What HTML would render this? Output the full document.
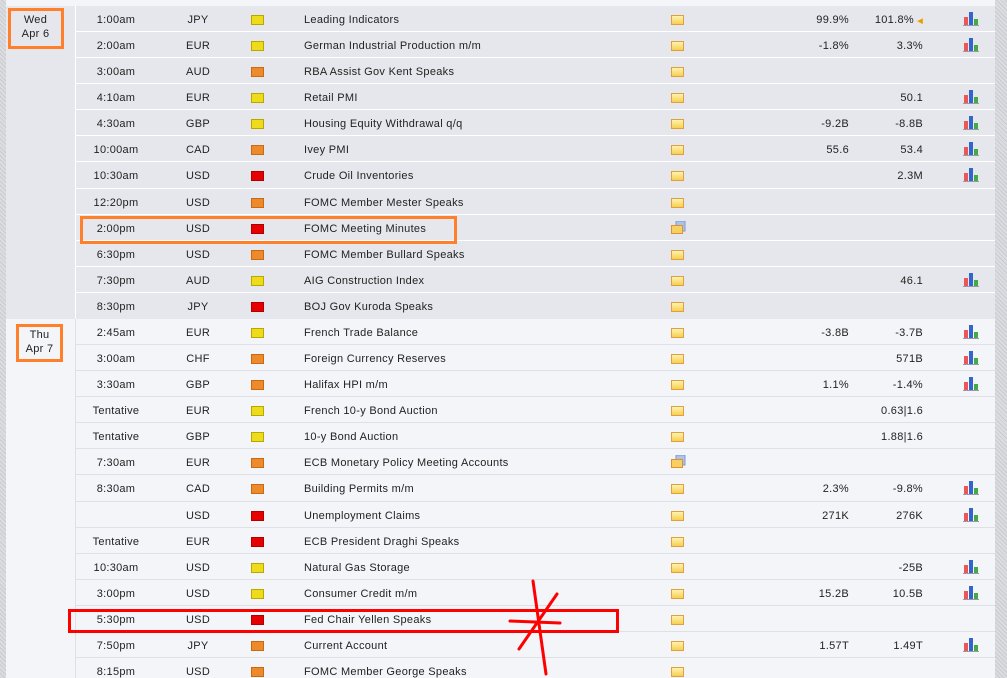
<!DOCTYPE html>
<html><head><meta charset="utf-8"><style>
*{margin:0;padding:0;box-sizing:border-box}
html,body{width:1007px;height:678px;overflow:hidden}
body{background:#f4f5f9;font-family:"Liberation Sans",sans-serif;font-size:11px;letter-spacing:0.3px;color:#222;position:relative}
.lstripe{position:absolute;left:0;top:0;width:6px;height:678px;background:repeating-linear-gradient(45deg,#c9cacd 0 1px,#dcdde0 1px 3px)}
.rstripe{position:absolute;left:995px;top:0;width:12px;height:678px;background:repeating-linear-gradient(45deg,#c9cacd 0 1px,#dcdde0 1px 3px)}
.sec{position:absolute;left:6px;width:989px;overflow:hidden}
.wed{top:6px;height:313px;background:#e6e7ec}
.thu{top:319px;height:359px;background:#f4f5f9}
.datecol{position:absolute;left:0;top:0;width:70px;height:100%;border-right:1px solid #fff}
.date{position:absolute;text-align:center;line-height:14px;font-size:11px}
.rows{position:absolute;left:70px;top:0;right:0}
.r{position:relative;height:26.08px;border-bottom:1px solid #fff}
.thu .r{border-bottom:1px solid #dfe0e6}
.r span{position:absolute;top:8px;white-space:nowrap}
.t{left:0;width:80px;text-align:center}
.c{left:80px;width:84px;text-align:center}
.e{left:228px}
.a{right:146px;width:60px;text-align:right}
.f{right:72px;width:70px;text-align:right}
.imp{position:absolute;left:175px;top:9px;width:13px;height:10px}
.y{background:#eedc1a;border:1px solid #b8a800}
.o{background:#ee8a2a;border:1px solid #c46a18}
.rd{background:#e60000;border:1px solid #b00000}
.fold{position:absolute;left:595px;top:9px;width:13px;height:10px;background:linear-gradient(#fff3b0,#f6cf50);border:1px solid #e0a040}
.fold2{position:absolute;left:595px;top:6px;width:15px;height:13px}
.ch{position:absolute;left:887px;top:5px;width:16px;height:15px}
.box{position:absolute;border:3px solid #ff7f2a}
</style></head><body>
<div class="lstripe"></div><div class="rstripe"></div>

<div class="sec wed">
<div class="datecol"></div>
<div class="rows">
<div class="r"><span class="t">1:00am</span><span class="c">JPY</span><i class="imp y"></i><span class="e">Leading Indicators</span><i class="fold"></i><span class="a">99.9%</span><span class="f">101.8% <b style="color:#e8a000;font-size:7px">◀</b></span><svg class="ch"><rect x="1" y="6" width="4" height="8" fill="#e55"/><rect x="6" y="1" width="4" height="13" fill="#36c"/><rect x="11" y="8" width="4" height="6" fill="#4a4"/><rect x="0" y="14" width="16" height="1" fill="#99a"/></svg></div>
<div class="r"><span class="t">2:00am</span><span class="c">EUR</span><i class="imp y"></i><span class="e">German Industrial Production m/m</span><i class="fold"></i><span class="a">-1.8%</span><span class="f">3.3%</span><svg class="ch"><rect x="1" y="6" width="4" height="8" fill="#e55"/><rect x="6" y="1" width="4" height="13" fill="#36c"/><rect x="11" y="8" width="4" height="6" fill="#4a4"/><rect x="0" y="14" width="16" height="1" fill="#99a"/></svg></div>
<div class="r"><span class="t">3:00am</span><span class="c">AUD</span><i class="imp o"></i><span class="e">RBA Assist Gov Kent Speaks</span><i class="fold"></i></div>
<div class="r"><span class="t">4:10am</span><span class="c">EUR</span><i class="imp y"></i><span class="e">Retail PMI</span><i class="fold"></i><span class="f">50.1</span><svg class="ch"><rect x="1" y="6" width="4" height="8" fill="#e55"/><rect x="6" y="1" width="4" height="13" fill="#36c"/><rect x="11" y="8" width="4" height="6" fill="#4a4"/><rect x="0" y="14" width="16" height="1" fill="#99a"/></svg></div>
<div class="r"><span class="t">4:30am</span><span class="c">GBP</span><i class="imp y"></i><span class="e">Housing Equity Withdrawal q/q</span><i class="fold"></i><span class="a">-9.2B</span><span class="f">-8.8B</span><svg class="ch"><rect x="1" y="6" width="4" height="8" fill="#e55"/><rect x="6" y="1" width="4" height="13" fill="#36c"/><rect x="11" y="8" width="4" height="6" fill="#4a4"/><rect x="0" y="14" width="16" height="1" fill="#99a"/></svg></div>
<div class="r"><span class="t">10:00am</span><span class="c">CAD</span><i class="imp o"></i><span class="e">Ivey PMI</span><i class="fold"></i><span class="a">55.6</span><span class="f">53.4</span><svg class="ch"><rect x="1" y="6" width="4" height="8" fill="#e55"/><rect x="6" y="1" width="4" height="13" fill="#36c"/><rect x="11" y="8" width="4" height="6" fill="#4a4"/><rect x="0" y="14" width="16" height="1" fill="#99a"/></svg></div>
<div class="r"><span class="t">10:30am</span><span class="c">USD</span><i class="imp rd"></i><span class="e">Crude Oil Inventories</span><i class="fold"></i><span class="f">2.3M</span><svg class="ch"><rect x="1" y="6" width="4" height="8" fill="#e55"/><rect x="6" y="1" width="4" height="13" fill="#36c"/><rect x="11" y="8" width="4" height="6" fill="#4a4"/><rect x="0" y="14" width="16" height="1" fill="#99a"/></svg></div>
<div class="r"><span class="t">12:20pm</span><span class="c">USD</span><i class="imp o"></i><span class="e">FOMC Member Mester Speaks</span><i class="fold"></i></div>
<div class="r"><span class="t">2:00pm</span><span class="c">USD</span><i class="imp rd"></i><span class="e">FOMC Meeting Minutes</span><svg class="fold2"><rect x="5" y="0" width="9" height="10" fill="#a8c4ee" stroke="#7a9ad0"/><rect x="0.5" y="4.5" width="11" height="8" fill="#f6d060" stroke="#e09030"/></svg></div>
<div class="r"><span class="t">6:30pm</span><span class="c">USD</span><i class="imp o"></i><span class="e">FOMC Member Bullard Speaks</span><i class="fold"></i></div>
<div class="r"><span class="t">7:30pm</span><span class="c">AUD</span><i class="imp y"></i><span class="e">AIG Construction Index</span><i class="fold"></i><span class="f">46.1</span><svg class="ch"><rect x="1" y="6" width="4" height="8" fill="#e55"/><rect x="6" y="1" width="4" height="13" fill="#36c"/><rect x="11" y="8" width="4" height="6" fill="#4a4"/><rect x="0" y="14" width="16" height="1" fill="#99a"/></svg></div>
<div class="r" style="border-bottom:none"><span class="t">8:30pm</span><span class="c">JPY</span><i class="imp rd"></i><span class="e">BOJ Gov Kuroda Speaks</span><i class="fold"></i></div>
</div></div>

<div class="sec thu">
<div class="datecol" style="border-right-color:#dfe0e6"></div>
<div class="rows">
<div class="r"><span class="t">2:45am</span><span class="c">EUR</span><i class="imp y"></i><span class="e">French Trade Balance</span><i class="fold"></i><span class="a">-3.8B</span><span class="f">-3.7B</span><svg class="ch"><rect x="1" y="6" width="4" height="8" fill="#e55"/><rect x="6" y="1" width="4" height="13" fill="#36c"/><rect x="11" y="8" width="4" height="6" fill="#4a4"/><rect x="0" y="14" width="16" height="1" fill="#99a"/></svg></div>
<div class="r"><span class="t">3:00am</span><span class="c">CHF</span><i class="imp o"></i><span class="e">Foreign Currency Reserves</span><i class="fold"></i><span class="f">571B</span><svg class="ch"><rect x="1" y="6" width="4" height="8" fill="#e55"/><rect x="6" y="1" width="4" height="13" fill="#36c"/><rect x="11" y="8" width="4" height="6" fill="#4a4"/><rect x="0" y="14" width="16" height="1" fill="#99a"/></svg></div>
<div class="r"><span class="t">3:30am</span><span class="c">GBP</span><i class="imp o"></i><span class="e">Halifax HPI m/m</span><i class="fold"></i><span class="a">1.1%</span><span class="f">-1.4%</span><svg class="ch"><rect x="1" y="6" width="4" height="8" fill="#e55"/><rect x="6" y="1" width="4" height="13" fill="#36c"/><rect x="11" y="8" width="4" height="6" fill="#4a4"/><rect x="0" y="14" width="16" height="1" fill="#99a"/></svg></div>
<div class="r"><span class="t">Tentative</span><span class="c">EUR</span><i class="imp y"></i><span class="e">French 10-y Bond Auction</span><i class="fold"></i><span class="f">0.63|1.6</span></div>
<div class="r"><span class="t">Tentative</span><span class="c">GBP</span><i class="imp y"></i><span class="e">10-y Bond Auction</span><i class="fold"></i><span class="f">1.88|1.6</span></div>
<div class="r"><span class="t">7:30am</span><span class="c">EUR</span><i class="imp o"></i><span class="e">ECB Monetary Policy Meeting Accounts</span><svg class="fold2"><rect x="5" y="0" width="9" height="10" fill="#a8c4ee" stroke="#7a9ad0"/><rect x="0.5" y="4.5" width="11" height="8" fill="#f6d060" stroke="#e09030"/></svg></div>
<div class="r"><span class="t">8:30am</span><span class="c">CAD</span><i class="imp o"></i><span class="e">Building Permits m/m</span><i class="fold"></i><span class="a">2.3%</span><span class="f">-9.8%</span><svg class="ch"><rect x="1" y="6" width="4" height="8" fill="#e55"/><rect x="6" y="1" width="4" height="13" fill="#36c"/><rect x="11" y="8" width="4" height="6" fill="#4a4"/><rect x="0" y="14" width="16" height="1" fill="#99a"/></svg></div>
<div class="r"><span class="c">USD</span><i class="imp rd"></i><span class="e">Unemployment Claims</span><i class="fold"></i><span class="a">271K</span><span class="f">276K</span><svg class="ch"><rect x="1" y="6" width="4" height="8" fill="#e55"/><rect x="6" y="1" width="4" height="13" fill="#36c"/><rect x="11" y="8" width="4" height="6" fill="#4a4"/><rect x="0" y="14" width="16" height="1" fill="#99a"/></svg></div>
<div class="r"><span class="t">Tentative</span><span class="c">EUR</span><i class="imp rd"></i><span class="e">ECB President Draghi Speaks</span><i class="fold"></i></div>
<div class="r"><span class="t">10:30am</span><span class="c">USD</span><i class="imp y"></i><span class="e">Natural Gas Storage</span><i class="fold"></i><span class="f">-25B</span><svg class="ch"><rect x="1" y="6" width="4" height="8" fill="#e55"/><rect x="6" y="1" width="4" height="13" fill="#36c"/><rect x="11" y="8" width="4" height="6" fill="#4a4"/><rect x="0" y="14" width="16" height="1" fill="#99a"/></svg></div>
<div class="r"><span class="t">3:00pm</span><span class="c">USD</span><i class="imp y"></i><span class="e">Consumer Credit m/m</span><i class="fold"></i><span class="a">15.2B</span><span class="f">10.5B</span><svg class="ch"><rect x="1" y="6" width="4" height="8" fill="#e55"/><rect x="6" y="1" width="4" height="13" fill="#36c"/><rect x="11" y="8" width="4" height="6" fill="#4a4"/><rect x="0" y="14" width="16" height="1" fill="#99a"/></svg></div>
<div class="r"><span class="t">5:30pm</span><span class="c">USD</span><i class="imp rd"></i><span class="e">Fed Chair Yellen Speaks</span><i class="fold"></i></div>
<div class="r"><span class="t">7:50pm</span><span class="c">JPY</span><i class="imp o"></i><span class="e">Current Account</span><i class="fold"></i><span class="a">1.57T</span><span class="f">1.49T</span><svg class="ch"><rect x="1" y="6" width="4" height="8" fill="#e55"/><rect x="6" y="1" width="4" height="13" fill="#36c"/><rect x="11" y="8" width="4" height="6" fill="#4a4"/><rect x="0" y="14" width="16" height="1" fill="#99a"/></svg></div>
<div class="r"><span class="t">8:15pm</span><span class="c">USD</span><i class="imp o"></i><span class="e">FOMC Member George Speaks</span><i class="fold"></i></div>
</div></div>

<div class="date" style="left:8px;top:13px;width:55px">Wed<br>Apr 6</div>
<div class="box" style="left:8px;top:8px;width:56px;height:41px"></div>
<div class="date" style="left:16px;top:328px;width:47px">Thu<br>Apr 7</div>
<div class="box" style="left:16px;top:324px;width:47px;height:38px"></div>
<div class="box" style="left:80px;top:216px;width:377px;height:28px"></div>
<div class="box" style="left:68px;top:609px;width:551px;height:24px;border-color:#ff0000"></div>
<svg style="position:absolute;left:0;top:0" width="1007" height="678"><g stroke="#ff0000" stroke-width="3" stroke-linecap="round" fill="none"><path d="M533 581 L546 674"/><path d="M557 594 L519 649"/><path d="M510 621 L560 623"/></g></svg>
</body></html>
